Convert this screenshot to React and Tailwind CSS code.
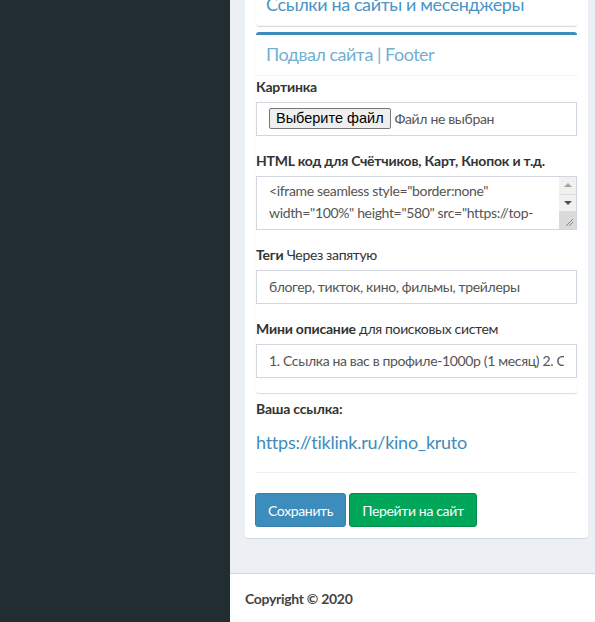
import React from 'react';

const font = { fontFamily: 'Lato, "Open Sans", "Liberation Sans", sans-serif' };

function Field({ label, hint, value, last }) {
  return (
    <div className={last ? '' : 'mb-[15px]'}>
      <div className="mb-[5px] h-5 leading-5 text-[14px] text-[#333] tracking-[-0.2px]">
        <span className="font-bold">{label}</span>
        {hint && <span className="font-normal tracking-[-0.35px]"> {hint}</span>}
      </div>
      <div className="h-[34px] border border-[#d2d6de] bg-white px-3 flex items-center">
        <div className="flex-1 min-w-0 overflow-hidden whitespace-nowrap text-[14px] text-[#555] tracking-[-0.35px]">
          {value}
        </div>
      </div>
    </div>
  );
}

function Scrollbar() {
  return (
    <div className="w-[17px] flex flex-col bg-[#f1f1f1]">
      <div className="h-[17px] flex items-center justify-center">
        <div className="w-0 h-0 border-x-[4px] border-x-transparent border-b-[4px] border-b-[#a3a3a3]" />
      </div>
      <div className="h-[17px] flex items-center justify-center border-t border-[#dcdcdc]">
        <div className="w-0 h-0 border-x-[4px] border-x-transparent border-t-[4px] border-t-[#505050]" />
      </div>
      <div className="flex-1 bg-[#dadada] relative">
        <svg className="absolute right-[2px] bottom-[2px]" width="9" height="9" viewBox="0 0 9 9">
          <path d="M1 8 L8 1 M4 8 L8 4" stroke="#888" strokeWidth="1" />
        </svg>
      </div>
    </div>
  );
}

export default function App() {
  return (
    <div className="h-[622px] w-[595px] flex overflow-hidden" style={font}>
      <aside className="w-[230px] shrink-0 bg-[#222d32]" />
      <main className="flex-1 flex flex-col bg-[#ecf0f5] min-w-0">
        <section className="flex-1 pl-[15px] pr-[7px] overflow-hidden">
          <div className="-mt-[5px] bg-white rounded-[3px] shadow-[0_1px_1px_rgba(0,0,0,0.1)] px-[11px] pb-[11px]">
            <div className="mb-[6px] shadow-[0_1px_1px_rgba(0,0,0,0.15)] rounded-b-[3px]">
              <div className="px-[10px] pt-0 pb-[10px] text-[18px] leading-[1.1] tracking-[-0.4px] text-[#4a94c6] border-b border-[#f4f4f4]">
                Ссылки на сайты и месенджеры
              </div>
            </div>

            <div className="border-t-[3px] border-[#3c8dbc] rounded-[3px] shadow-[0_1px_1px_rgba(0,0,0,0.15)]">
              <div className="px-[10px] py-[10px] text-[18px] leading-[1.1] tracking-[-0.5px] text-[#72afd2] border-b border-[#f4f4f4]">
                Подвал сайта | Footer
              </div>
              <div className="pt-[1px] pb-[15px] flex flex-col">
                <div className="mb-[15px]">
                  <div className="mb-[5px] h-5 leading-5 text-[14px] font-bold text-[#333] tracking-[-0.2px]">Картинка</div>
                  <div className="h-[34px] border border-[#d2d6de] px-3 flex items-center gap-1">
                    <span
                      className="h-[21px] px-[6px] flex items-center bg-[#efefef] border border-[#767676] rounded-[2px] text-[14.5px] text-black"
                      style={{ fontFamily: '"Liberation Sans", Arial, sans-serif' }}
                    >
                      Выберите файл
                    </span>
                    <span className="text-[14px] text-[#555] tracking-[-0.35px]">Файл не выбран</span>
                  </div>
                </div>

                <div className="mb-[15px]">
                  <div className="mb-[5px] h-5 leading-5 text-[14px] font-bold text-[#333] tracking-[-0.2px]">
                    HTML код для Счётчиков, Карт, Кнопок и т.д.
                  </div>
                  <div className="h-[54px] border border-[#d2d6de] flex overflow-hidden">
                    <div className="flex-1 px-3 pt-[3px] text-[14px] leading-[22px] tracking-[-0.35px] text-[#555] overflow-hidden">
                      &lt;iframe seamless style="border:none" width="100%" height="580" src="https://top-music.ru/embed/kino_kruto"&gt;&lt;/iframe&gt;
                    </div>
                    <Scrollbar />
                  </div>
                </div>

                <Field label="Теги" hint="Через запятую" value="блогер, тикток, кино, фильмы, трейлеры" />
                <Field
                  last
                  label="Мини описание"
                  hint="для поисковых систем"
                  value="1. Ссылка на вас в профиле-1000р (1 месяц) 2. Ссылка на вас в описании-500р"
                />
              </div>
            </div>

            <div className="h-5 leading-5 mt-[6px] text-[14px] font-bold text-[#333] tracking-[-0.2px]">Ваша ссылка:</div>
            <div className="mt-[14px] text-[18px] leading-[1.1] tracking-[-0.25px] text-[#3c8dbc]">https://tiklink.ru/kino_kruto</div>
            <hr className="mt-[20px] mb-5 border-t border-[#eee]" />

            <div className="flex gap-[3px] -ml-px">
              <button className="h-[34px] px-3 bg-[#3c8dbc] border border-[#367fa9] rounded-[3px] text-[14px] tracking-[-0.35px] text-white">
                Сохранить
              </button>
              <button className="h-[34px] px-3 bg-[#00a65a] border border-[#008d4c] rounded-[3px] text-[14px] tracking-[-0.35px] text-white">
                Перейти на сайт
              </button>
            </div>
          </div>
        </section>
        <footer className="h-[49px] shrink-0 bg-white border-t border-[#d2d6de] px-[15px] flex items-center">
          <span className="text-[14px] font-bold text-[#444] tracking-[-0.3px]">Copyright © 2020</span>
        </footer>
      </main>
    </div>
  );
}
